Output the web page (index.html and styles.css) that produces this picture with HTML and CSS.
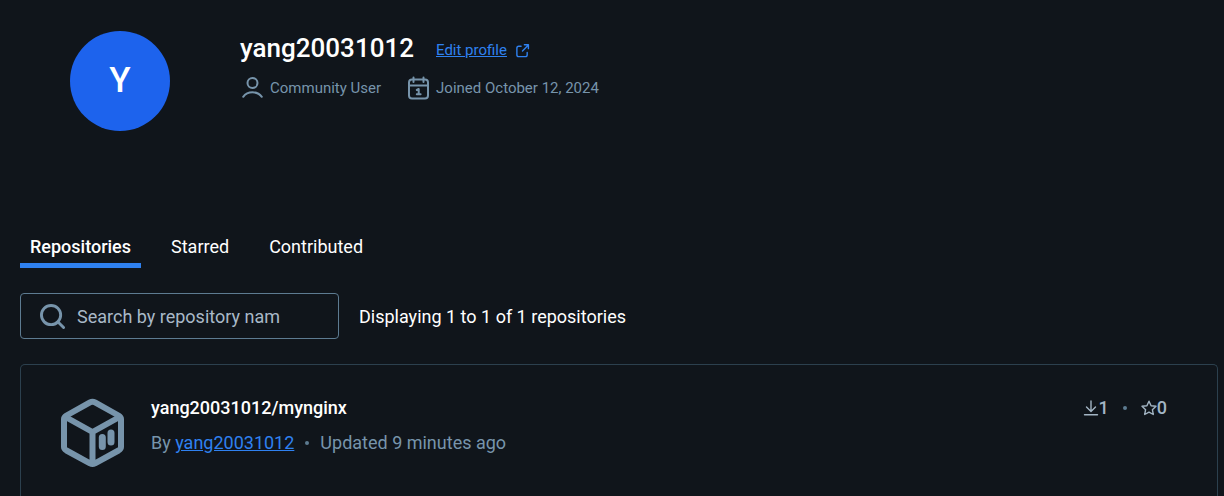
FILE: index.html
```html
<!DOCTYPE html>
<html lang="en">
<head>
<meta charset="utf-8">
<meta name="viewport" content="width=device-width, initial-scale=1">
<title>yang20031012 - Profile</title>
<link rel="stylesheet" href="styles.css">
</head>
<body>
<div class="page">
  <header class="profile">
    <div class="avatar">Y</div>
    <div class="profile-info">
      <div class="profile-heading">
        <h1 class="profile-name">yang20031012</h1>
        <a class="edit-link" href="#"><span class="edit-text">Edit profile</span><svg class="icon-external" viewBox="0 0 16 16" aria-hidden="true"><path d="M6.500 3.500H4Q2 3.500 2 5.500V12.500Q2 14.500 4 14.500H11Q13 14.500 13 12.500V10M8 8.500L14 2.500M10 1.800H14.300V6"/></svg></a>
      </div>
      <div class="profile-meta">
        <span class="meta-item"><svg class="icon-meta" viewBox="0 0 25 25" aria-hidden="true"><circle cx="12.500" cy="8" r="5"/><path d="M3.200 21.800C7.500 15.800 17.500 15.800 21.800 21.800"/></svg>Community User</span>
        <span class="meta-item"><svg class="icon-meta" viewBox="0 0 25 25" aria-hidden="true"><rect x="3" y="4.500" width="19" height="19" rx="3"/><path d="M3 10.500H22M7.500 2.500V7M17.500 2.500V7"/><path d="M10.800 15L12.700 14V19M10.800 19.200H14.600"/></svg>Joined October 12, 2024</span>
      </div>
    </div>
  </header>

  <nav class="tabs">
    <a class="tab tab-active" href="#" aria-current="page">Repositories</a>
    <a class="tab" href="#">Starred</a>
    <a class="tab" href="#">Contributed</a>
  </nav>

  <div class="toolbar">
    <label class="search">
      <svg class="icon-search" viewBox="0 0 26 26" aria-hidden="true"><circle cx="11.500" cy="11.500" r="10"/><path d="M18.500 18.500L24.500 24.500"/></svg>
      <input class="search-input" type="text" placeholder="Search by repository nam" aria-label="Search by repository name">
    </label>
    <p class="result-count">Displaying 1 to 1 of 1 repositories</p>
  </div>

  <article class="card">
    <svg class="icon-repo" viewBox="0 0 64 70" aria-hidden="true"><path class="box-edge" d="M29 4.300Q31.500 3 34 4.300L57.500 17.500Q60 19 60 21V49Q60 51 57.500 52.500L34 65.300Q31.500 66.500 29 65.300L5.500 52.500Q3 51 3 49V21Q3 19 5.500 17.500ZM4.500 19L31.500 34L58.500 19M31.500 34V65"/><path class="box-bars" d="M41.300 39.500V48.500M50 35V44"/></svg>
    <div class="repo">
      <h2 class="repo-name">yang20031012/mynginx</h2>
      <p class="repo-meta"><span>By <a class="repo-owner" href="#">yang20031012</a></span><span class="dot"></span><span>Updated 9 minutes ago</span></p>
    </div>
    <div class="stats">
      <span class="stat"><svg class="icon-stat" viewBox="0 0 16 16" aria-hidden="true"><path d="M8 1V11M3.500 7L8 11.500L12.500 7M1.500 14.700H14.500"/></svg>1</span>
      <span class="dot"></span>
      <span class="stat"><svg class="icon-stat" viewBox="0 0 16 16" aria-hidden="true"><path d="M8 1.200L10.100 5.700L15 6.300L11.400 9.700L12.300 14.500L8 12.200L3.700 14.500L4.600 9.700L1 6.300L5.900 5.700Z"/></svg>0</span>
    </div>
  </article>
</div>
</body>
</html>
```
FILE: styles.css
```css
* {
  box-sizing: border-box;
}

body {
  margin: 0;
  background: #10151b;
  color: #fff;
  font-family: Roboto, "Liberation Sans", sans-serif;
  font-size: 18px;
  line-height: 24px;
}

h1, h2, p {
  margin: 0;
}

svg {
  flex: none;
  fill: none;
  stroke: #7794ab;
  stroke-linecap: round;
  stroke-linejoin: round;
}

.page {
  display: flex;
  flex-direction: column;
  min-height: 100vh;
  padding: 31px 6px 0 20px;
}

.profile {
  display: flex;
  gap: 70px;
  padding-left: 50px;
}

.avatar {
  display: flex;
  align-items: center;
  justify-content: center;
  flex: none;
  width: 100px;
  height: 100px;
  border-radius: 50%;
  background: #1d63ed;
  font-size: 35px;
  font-weight: 500;
}

.profile-heading {
  display: flex;
  align-items: center;
  gap: 22px;
}

.profile-name {
  font-size: 26px;
  font-weight: 500;
  line-height: 34px;
}

.edit-link {
  display: flex;
  align-items: center;
  gap: 8px;
  padding-top: 4px;
  color: #2f81f0;
  font-size: 15px;
  text-decoration: none;
}

.edit-text {
  text-decoration: underline;
}

.icon-external {
  width: 15px;
  height: 15px;
  stroke: #2f81f0;
  stroke-width: 1.5;
}

.profile-meta {
  display: flex;
  gap: 25px;
  margin-top: 10px;
  color: #7794ab;
  font-size: 15px;
}

.meta-item {
  display: flex;
  align-items: center;
  gap: 5px;
}

.icon-meta {
  width: 25px;
  height: 25px;
  stroke-width: 2;
}

.tabs {
  display: flex;
  gap: 20px;
  margin-top: 97px;
}

.tab {
  padding: 7px 10px 4px;
  border-bottom: 5px solid transparent;
  color: #fff;
  text-decoration: none;
}

.tab-active {
  border-color: #2f81f0;
  font-weight: 500;
}

.toolbar {
  display: flex;
  align-items: center;
  gap: 20px;
  margin-top: 25px;
}

.search {
  display: flex;
  align-items: center;
  gap: 12px;
  width: 319px;
  height: 46px;
  padding: 0 19px;
  border: 1px solid #5d7b91;
  border-radius: 4px;
}

.icon-search {
  width: 25px;
  height: 25px;
  stroke-width: 3;
}

.search-input {
  flex: 1;
  min-width: 0;
  padding: 2px 0 0;
  border: 0;
  outline: 0;
  background: none;
  color: #fff;
  font: inherit;
}

.search-input::placeholder {
  color: #a9b9c8;
  opacity: 1;
}

.result-count {
  padding-top: 2px;
}

.card {
  display: flex;
  flex: 1;
  align-items: flex-start;
  margin-top: 25px;
  padding: 31px 50px 25px 40px;
  border: 1px solid #2c404e;
  border-bottom: 0;
  border-radius: 5px 5px 0 0;
}

.icon-repo {
  width: 64px;
  height: 70px;
  margin-top: 2px;
}

.box-edge {
  stroke-width: 6;
}

.box-bars {
  stroke-width: 7;
}

.repo {
  flex: 1;
  margin-left: 26px;
}

.repo-name {
  font-size: 18px;
  font-weight: 500;
  line-height: 24px;
}

.repo-meta {
  display: flex;
  align-items: center;
  gap: 11px;
  margin-top: 11px;
  color: #7794ab;
}

.repo-owner {
  color: #2f81f0;
}

.dot {
  width: 4px;
  height: 4px;
  border-radius: 50%;
  background: #5d7b91;
}

.stats {
  display: flex;
  align-items: center;
  gap: 14px;
  color: #a3b5c4;
  font-weight: 500;
}

.stat {
  display: flex;
  align-items: center;
}

.icon-stat {
  width: 16px;
  height: 16px;
  stroke: #a3b5c4;
  stroke-width: 1.4;
}
```
